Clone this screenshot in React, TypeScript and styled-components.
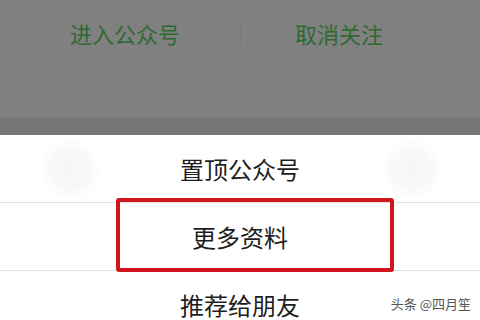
import styled, { createGlobalStyle } from 'styled-components'

const GlobalStyle = createGlobalStyle`
  html, body {
    margin: 0;
    padding: 0;
    background: #ffffff;
    font-family: "Noto Sans CJK SC", "Noto Sans", sans-serif;
  }
`;

const Screen = styled.div`
  position: relative;
  width: 480px;
  height: 320px;
  overflow: hidden;
  display: flex;
  flex-direction: column;
  background: #ffffff;
`;

const Dimmed = styled.div`
  flex-shrink: 0;
  height: 118px;
  background: #808080;
  display: flex;
  flex-direction: column;
`;

const ActionRow = styled.div`
  height: 66px;
  display: grid;
  grid-template-columns: 230px 1px 196px;
  align-items: center;
  padding-left: 10px;
`;

const ActionButton = styled.div`
  text-align: center;
  font-size: 22px;
  color: #2d6a31;
  line-height: 1;
`;

const Divider = styled.div`
  width: 1px;
  height: 24px;
  background: #787878;
`;

const Band = styled.div`
  flex-shrink: 0;
  height: 17px;
  background: #77777a;
`;

const Menu = styled.div`
  position: relative;
  flex-shrink: 0;
  display: flex;
  flex-direction: column;
`;

const MenuItem = styled.div<{ $first?: boolean }>`
  flex-shrink: 0;
  height: 67px;
  display: flex;
  align-items: center;
  justify-content: center;
  font-size: 24px;
  color: #1e1e1e;
  border-top: ${p => (p.$first ? 'none' : '1px solid #e0e0e0')};
`;

const Blob = styled.div<{ $left: number }>`
  position: absolute;
  top: 2px;
  left: ${p => p.$left}px;
  width: 64px;
  height: 64px;
  border-radius: 50%;
  background: radial-gradient(circle, #f6f6f6 0, #f8f8f8 40%, rgba(255, 255, 255, 0) 70%);
`;

const Highlight = styled.div`
  position: absolute;
  left: 116px;
  top: 63px;
  width: 270px;
  height: 66px;
  border: 4px solid #d2141e;
  border-radius: 3px;
`;

const Watermark = styled.div`
  position: absolute;
  right: 9px;
  bottom: 7px;
  font-size: 13px;
  color: #555555;
  text-shadow: 0 0 2px #ffffff;
`;

const App = () => {
  return (
    <>
      <GlobalStyle />
      <Screen>
        <Dimmed>
          <ActionRow>
            <ActionButton>进入公众号</ActionButton>
            <Divider />
            <ActionButton>取消关注</ActionButton>
          </ActionRow>
        </Dimmed>
        <Band />
        <Menu>
          <Blob $left={38} />
          <Blob $left={380} />
          <MenuItem $first>置顶公众号</MenuItem>
          <MenuItem>更多资料</MenuItem>
          <MenuItem>推荐给朋友</MenuItem>
          <Highlight />
        </Menu>
        <Watermark>头条 @四月笙</Watermark>
      </Screen>
    </>
  )
}

export default App
